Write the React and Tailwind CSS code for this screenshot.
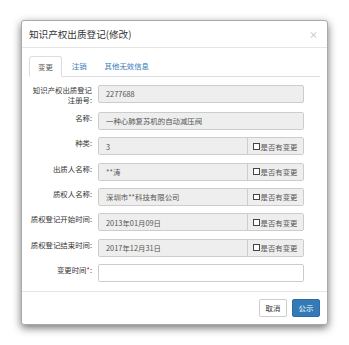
import React from "react";

const font = { fontFamily: '"Noto Sans CJK SC", "Noto Sans", sans-serif' };

const Row = ({ label, value, addon, required, readOnly = true }) => (
  <div className="flex h-[18px]">
    <div className="w-[63px] shrink-0 pt-[1px] text-right text-[7.4px] leading-[10px] text-[#333]">
      {label}
      {required && <span className="text-[#e00]">*</span>}:
    </div>
    <div className="ml-[6px] flex w-[206px] overflow-hidden rounded-[2px] border border-[#ccc]">
      <div
        className={
          "flex flex-1 items-center pl-[7px] text-[7.4px] text-[#555] " +
          (readOnly ? "bg-[#eee]" : "bg-white")
        }
      >
        {value}
      </div>
      {addon && (
        <div className="flex w-[56px] items-center border-l border-[#ccc] bg-[#eee] pl-[5px] text-[7.4px] text-[#555]">
          <span className="mr-[1px] inline-block h-[6.5px] w-[6.5px] border border-[#444] bg-white"></span>
          是否有变更
        </div>
      )}
    </div>
  </div>
);

const App = () => {
  return (
    <div className="h-[345px] w-[349px] bg-white pt-[20px] pl-[21px]" style={font}>
      <div className="w-[307px] rounded-[3px] border border-[#aaa] bg-white shadow-[0_3px_9px_rgba(0,0,0,0.55)]">
        <div className="flex h-[27px] items-center justify-between border-b border-[#e5e5e5] pl-[7px] pr-[9px]">
          <span className="text-[9.6px] text-[#333]">知识产权出质登记(修改)</span>
          <span className="text-[9px] font-bold leading-none text-[#000] opacity-20">×</span>
        </div>

        <div className="px-[7px] pt-[8px] pb-[9px]">
          <div className="flex h-[21px] border-b border-[#ddd] text-[7.4px]">
            <div className="-mb-px flex items-center rounded-t-[3px] border border-b-white border-[#ddd] bg-white px-[8px] text-[#555]">
              变更
            </div>
            <div className="ml-[2px] flex items-center px-[8px] text-[#337ab7]">注销</div>
            <div className="ml-[2px] flex items-center px-[8px] text-[#337ab7]">其他无效信息</div>
          </div>

          <div className="mt-[8px] flex">
            <div className="w-[63px] shrink-0 text-right text-[7.4px] leading-[10px] text-[#333]">
              知识产权出质登记
              <br />
              注册号:
            </div>
            <div className="ml-[6px] flex h-[18px] w-[206px] items-center rounded-[2px] border border-[#ccc] bg-[#eee] pl-[7px] text-[7.4px] text-[#555]">
              2277688
            </div>
          </div>

          <div className="mt-[7px] flex flex-col gap-[7.33px]">
            <Row label="名称" value="一种心肺复苏机的自动减压阀" />
            <Row label="种类" value="3" addon />
            <Row label="出质人名称" value="**涛" addon />
            <Row label="质权人名称" value="深圳市**科技有限公司" addon />
            <Row label="质权登记开始时间" value="2013年01月09日" addon />
            <Row label="质权登记结束时间" value="2017年12月31日" addon />
            <Row label="变更时间" value="" required readOnly={false} />
          </div>
        </div>

        <div className="flex justify-end gap-[5px] border-t border-[#e5e5e5] px-[7px] py-[7px]">
          <button className="flex h-[18px] w-[28px] items-center justify-center rounded-[2px] border border-[#ccc] bg-white text-[7.4px] text-[#333]">
            取消
          </button>
          <button className="flex h-[18px] w-[28px] items-center justify-center rounded-[2px] border border-[#2e6da4] bg-[#337ab7] text-[7.4px] text-white">
            公示
          </button>
        </div>
      </div>
    </div>
  );
};

export default App;
